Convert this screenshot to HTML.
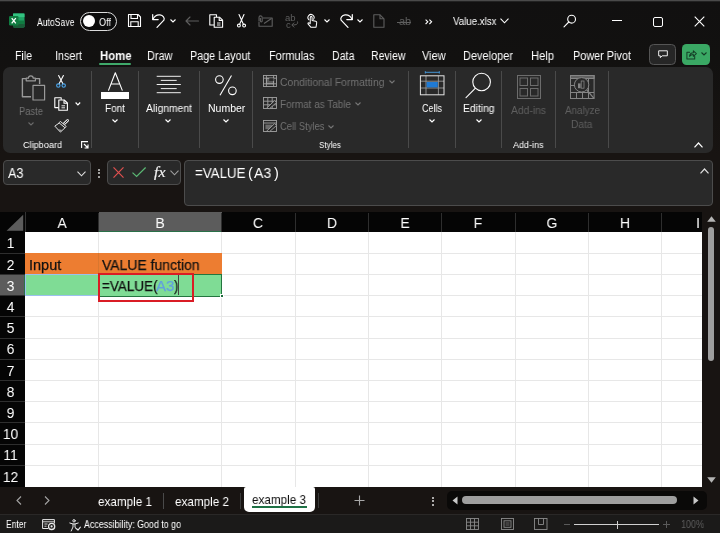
<!DOCTYPE html>
<html lang="en">
<head>
<meta charset="utf-8">
<title>Value.xlsx - Excel</title>
<style>
*{box-sizing:border-box;margin:0;padding:0}
html,body{width:720px;height:533px;overflow:hidden;background:#181412}
body{font-family:"Liberation Sans",sans-serif;color:#fff;position:relative;font-size:12px}
.abs{position:absolute}
.t{position:absolute;white-space:nowrap;line-height:1;will-change:transform}
svg{position:absolute;overflow:visible}
/* title bar */
#title{left:0;top:0;width:720px;height:160px;background:linear-gradient(#111010 0,#121110 60px,#181412 155px)}
#topline{left:0;top:0;width:720px;height:2px;background:linear-gradient(#4a4a4a 0,#4a4a4a 50%,#222 50%,#222 100%)}
/* tabs */
.tab{font-size:12px;top:49.5px;color:#fff}
/* ribbon */
#ribbon{left:3px;top:67px;width:710px;height:86px;background:#292929;border-radius:7px}
.sep{position:absolute;width:1px;background:#4a4a4a;top:71px;height:77px}
.rl{font-size:10.5px;color:#fff;text-align:center}
.dim{color:#727272}
.dim2{color:#5f5f5f}
.grp{font-size:9.5px;color:#fff}
/* formula bar */
.box{position:absolute;background:#292929;border:1px solid #4c4c4c;border-radius:4px}
/* grid */
#grid{left:25px;top:232px;width:675px;height:256px;background:#fff}
.ch{position:absolute;top:212px;height:20px;background:#0a0a0a;color:#fff;font-size:14px;text-align:center;line-height:21px}
.rh{position:absolute;left:0;width:25px;background:#0a0a0a;color:#fff;font-size:14.5px;text-align:center;line-height:21px;height:21px}
.vl{position:absolute;top:232px;width:1px;height:256px;background:#e7e7e7}
.hl{position:absolute;left:25px;height:1px;width:677px;background:#e7e7e7}
.hd{font-size:14.5px;color:#fff;text-align:center;transform:scaleX(0.95)}
.ct{font-size:14.5px;color:#111;-webkit-text-stroke:0.25px}
.cell{position:absolute;font-size:14px;color:#111;line-height:21px;white-space:nowrap}
</style>
</head>
<body>
<!-- TITLE BAR -->
<div class="abs" id="title"></div>
<div class="abs" id="topline"></div>


<!-- Excel logo -->
<svg style="left:9px;top:13px" width="16" height="15" viewBox="0 0 16 15">
  <rect x="4" y="0.5" width="11.5" height="14" rx="1.2" fill="#21a366"/>
  <rect x="4" y="0.5" width="11.5" height="3.6" fill="#33c481"/>
  <rect x="4" y="7.5" width="11.5" height="3.5" fill="#107c41"/>
  <rect x="4" y="11" width="11.5" height="3.5" rx="1.2" fill="#185c37"/>
  <rect x="0" y="3" width="9.5" height="9.5" rx="1.2" fill="#107c41"/>
  <path d="M2.7 5.2 L6.8 10.3 M6.8 5.2 L2.7 10.3" stroke="#fff" stroke-width="1.3" fill="none"/>
</svg>
<div class="t" style="left:37px;top:17px;font-size:10.5px;transform-origin:0 50%;transform:scaleX(0.8233)">AutoSave</div>
<div class="abs" style="left:80px;top:12px;width:37px;height:18.5px;border:1.3px solid #dcdcdc;border-radius:9.5px;background:#0c0c0c"></div>
<div class="abs" style="left:82.8px;top:15.2px;width:12.2px;height:12.2px;border-radius:50%;background:#fff"></div>
<div class="t" style="left:99px;top:17px;font-size:10.5px;transform-origin:0 50%;transform:scaleX(0.8688)">Off</div>
<!-- save -->
<svg style="left:127px;top:13px" width="15" height="15" viewBox="0 0 15 15" fill="none" stroke="#fff" stroke-width="1.1">
  <path d="M1.5 1.5 H11 L13.5 4 V13.5 H1.5 Z" stroke-linejoin="round"/>
  <path d="M4 1.5 V5.5 H10.5 V1.5"/>
  <path d="M3.8 13.5 V8.8 H11.2 V13.5"/>
</svg>
<!-- undo -->
<svg style="left:152px;top:14px" width="13" height="14" viewBox="0 0 13 14" fill="none" stroke="#fff" stroke-width="1.2" stroke-linecap="round" stroke-linejoin="round">
  <path d="M0.7 0.6 V5.6 H6.2"/>
  <path d="M0.9 5.3 C2.5 2 5.5 0.6 8 0.9 C11 1.3 13 3.8 11.9 6.2 L5 13.4"/>
</svg>
<svg style="left:170px;top:19px" width="6" height="4" viewBox="0 0 6 4" fill="none" stroke="#fff" stroke-width="1.1"><path d="M0.5 0.5 L3 3 L5.5 0.5"/></svg>
<!-- back arrow dim -->
<svg style="left:184.5px;top:15.5px" width="14" height="10" viewBox="0 0 14 10" fill="none" stroke="#5e5e5e" stroke-width="1.1" stroke-linecap="round" stroke-linejoin="round"><path d="M13.5 5 H1 M5 1 L1 5 L5 9"/></svg>
<!-- copy/paste icon -->
<svg style="left:209px;top:14px" width="15" height="14" viewBox="0 0 15 14" fill="none" stroke="#fff" stroke-width="1.1" stroke-linejoin="round">
  <path d="M5 11 H0.8 V0.8 H7.5 V3"/>
  <path d="M5.2 3.2 H10.5 L13.6 6.2 V13.2 H5.2 Z"/>
  <path d="M10.2 3.4 V6.4 H13.4"/>
  <path d="M8 9 H11.5 M8 11 H11.5" stroke-width="0.9"/>
</svg>
<!-- scissors -->
<svg style="left:236.5px;top:14px" width="9" height="14" viewBox="0 0 9 14" fill="none" stroke="#fff" stroke-width="1.1" stroke-linecap="round">
  <path d="M2 0.6 L6.4 10.2 M7 0.6 L2.6 10.2"/>
  <circle cx="1.9" cy="11.6" r="1.45"/><circle cx="7.1" cy="11.6" r="1.45"/>
</svg>
<!-- mail dim -->
<svg style="left:258px;top:15px" width="15" height="12" viewBox="0 0 15 12" fill="none" stroke="#5e5e5e" stroke-width="1.1" stroke-linejoin="round">
  <path d="M5 3 H14.2 V11.2 H1 V7"/>
  <path d="M6 8.5 L13.5 3.5"/>
  <path d="M1 6.5 V2.5 A1.6 1.6 0 0 1 4.2 2.5 V6 A0.9 0.9 0 0 1 2.4 6 V3"/>
</svg>
<!-- abc dim -->
<div class="t" style="left:285px;top:13px;font-size:9.5px;color:#5e5e5e">ab</div>
<div class="t" style="left:285.5px;top:19.5px;font-size:9.5px;color:#5e5e5e">c</div>
<svg style="left:290.5px;top:20.5px" width="8" height="7" viewBox="0 0 8 7" fill="none" stroke="#5e5e5e" stroke-width="1"><path d="M6.5 0.5 C7 3 6 4 1 4 M3.2 1.6 L0.8 4 L3.2 6.4"/></svg>
<!-- touch -->
<svg style="left:305.5px;top:13.8px" width="12" height="14" viewBox="0 0 13 15" fill="none" stroke="#fff" stroke-width="1.1" stroke-linecap="round" stroke-linejoin="round">
  <path d="M3.2 6.2 A3.3 3.3 0 1 1 8.2 5.6"/>
  <path d="M4.6 9.5 V3.6 A1 1 0 0 1 6.6 3.6 V7 L10.6 7.8 Q11.8 8.1 11.6 9.4 L10.9 14.2 H5.2 L2.2 10.6 Q1.8 9.6 3 9.4 L4.6 10.4"/>
</svg>
<svg style="left:324.3px;top:19px" width="6" height="4" viewBox="0 0 6 4" fill="none" stroke="#fff" stroke-width="1.1"><path d="M0.5 0.5 L3 3 L5.5 0.5"/></svg>
<!-- redo -->
<svg style="left:340px;top:14px" width="13" height="14" viewBox="0 0 13 14" fill="none" stroke="#fff" stroke-width="1.2" stroke-linecap="round" stroke-linejoin="round">
  <path d="M12.3 0.6 V5.6 H6.8"/>
  <path d="M12.1 5.3 C10.5 2 7.5 0.6 5 0.9 C2 1.3 0 3.8 1.1 6.2 L8 13.4"/>
</svg>
<svg style="left:357px;top:19px" width="6" height="4" viewBox="0 0 6 4" fill="none" stroke="#fff" stroke-width="1.1"><path d="M0.5 0.5 L3 3 L5.5 0.5"/></svg>
<!-- new file dim -->
<svg style="left:373px;top:14px" width="12" height="14" viewBox="0 0 12 14" fill="none" stroke="#5e5e5e" stroke-width="1.1" stroke-linejoin="round">
  <path d="M0.8 0.8 H7 L11 4.8 V13.2 H0.8 Z"/><path d="M7 0.8 V4.8 H11"/>
</svg>
<!-- ab strike dim -->
<div class="t" style="left:398.5px;top:16px;font-size:11px;color:#5e5e5e">ab</div>
<div class="abs" style="left:397px;top:21.5px;width:14px;height:1px;background:#5e5e5e"></div>
<!-- >> -->
<svg style="left:424.8px;top:19.3px" width="8" height="6" viewBox="0 0 8 6" fill="none" stroke="#fff" stroke-width="1.1"><path d="M0.6 0.6 L2.8 2.8 L0.6 5 M4.4 0.6 L6.6 2.8 L4.4 5"/></svg>
<div class="t" style="left:453.3px;top:16px;font-size:11px;transform-origin:0 50%;transform:scaleX(0.8818)">Value.xlsx</div>
<svg style="left:500px;top:18px" width="9" height="6" viewBox="0 0 9 6" fill="none" stroke="#fff" stroke-width="1.1"><path d="M0.5 0.7 L4.5 4.8 L8.5 0.7"/></svg>
<!-- search -->
<svg style="left:563px;top:14px" width="14" height="14" viewBox="0 0 14 14" fill="none" stroke="#fff" stroke-width="1.1" stroke-linecap="round"><circle cx="8.6" cy="5.2" r="3.9"/><path d="M5.8 8 L1 12.8"/></svg>
<!-- window controls -->
<div class="abs" style="left:612px;top:20px;width:10px;height:1px;background:#fff"></div>
<div class="abs" style="left:653px;top:17px;width:10px;height:10px;border:1.2px solid #fff;border-radius:2px"></div>
<svg style="left:694px;top:16px" width="11" height="11" viewBox="0 0 11 11" fill="none" stroke="#fff" stroke-width="1.1"><path d="M0.7 0.7 L10.3 10.3 M10.3 0.7 L0.7 10.3"/></svg>

<!-- TABS -->
<div class="t tab" style="left:14.5px;transform-origin:0 50%;transform:scaleX(0.8788)">File</div>
<div class="t tab" style="left:55px;transform-origin:0 50%;transform:scaleX(0.8995)">Insert</div>
<div class="t tab" style="left:99.5px;font-weight:bold;transform-origin:0 50%;transform:scaleX(0.9447)" id="home">Home</div>
<div class="abs" style="left:99px;top:62.5px;width:32px;height:2px;background:#3fa96a;border-radius:1px"></div>
<div class="t tab" style="left:147px;transform-origin:0 50%;transform:scaleX(0.9102)">Draw</div>
<div class="t tab" style="left:190px;transform-origin:0 50%;transform:scaleX(0.8978)">Page Layout</div>
<div class="t tab" style="left:268.5px;transform-origin:0 50%;transform:scaleX(0.9097)">Formulas</div>
<div class="t tab" style="left:331.5px;transform-origin:0 50%;transform:scaleX(0.8872)">Data</div>
<div class="t tab" style="left:370.5px;transform-origin:0 50%;transform:scaleX(0.8765)">Review</div>
<div class="t tab" style="left:422px;transform-origin:0 50%;transform:scaleX(0.9110)">View</div>
<div class="t tab" style="left:463px;transform-origin:0 50%;transform:scaleX(0.9140)">Developer</div>
<div class="t tab" style="left:531px;transform-origin:0 50%;transform:scaleX(0.9316)">Help</div>
<div class="t tab" style="left:572.5px;transform-origin:0 50%;transform:scaleX(0.9058)">Power Pivot</div>
<!-- comment button -->
<div class="abs" style="left:649px;top:43.8px;width:27px;height:21px;background:#262626;border:1px solid #555;border-radius:4.5px"></div>
<svg style="left:657.5px;top:49.8px" width="10" height="8.6" viewBox="0 0 12 10" fill="none" stroke="#fff" stroke-width="1.1" stroke-linejoin="round"><path d="M0.8 0.8 H11.2 V6.8 H5 L2.8 9 V6.8 H0.8 Z"/></svg>
<!-- share button -->
<div class="abs" style="left:682.3px;top:43.8px;width:27.3px;height:21px;background:#3aa864;border-radius:4.5px"></div>
<svg style="left:685.8px;top:48.6px" width="11" height="11" viewBox="0 0 12 12" fill="none" stroke="#143d26" stroke-width="1.1" stroke-linejoin="round" stroke-linecap="round"><path d="M4 3.5 H1 V11 H9.5 V8"/><path d="M3.8 8 C4.2 5.2 6 4.2 8 4.2 V2 L11.3 5 L8 8 V6 C6.2 6 4.8 6.6 3.8 8 Z"/></svg>
<svg style="left:700.6px;top:52.3px" width="6" height="4" viewBox="0 0 6 4" fill="none" stroke="#143d26" stroke-width="1.1"><path d="M0.5 0.5 L3 3 L5.5 0.5"/></svg>

<!-- RIBBON -->
<div class="abs" id="ribbon"></div>


<!-- separators -->
<div class="sep" style="left:91px"></div>
<div class="sep" style="left:138px"></div>
<div class="sep" style="left:199px"></div>
<div class="sep" style="left:252px"></div>
<div class="sep" style="left:408px"></div>
<div class="sep" style="left:455px"></div>
<div class="sep" style="left:501px"></div>
<div class="sep" style="left:555px"></div>
<div class="sep" style="left:608px"></div>

<!-- Clipboard group -->
<svg style="left:21px;top:75px" width="25" height="26" viewBox="0 0 25 26" fill="none" stroke="#9a9a9a" stroke-width="1.4" stroke-linejoin="round">
  <path d="M10 21.8 H1.4 V3.6 H5"/>
  <path d="M14.5 3.6 H18.6 V9"/>
  <path d="M5.2 5.8 V3.2 H7.4 A2.4 2.4 0 0 1 12.2 3.2 H14.4 V5.8 Z" stroke-width="1.2"/>
  <rect x="12" y="10.4" width="11.6" height="14.6" stroke-width="1.2"/>
</svg>
<div class="t rl dim" style="left:19.3px;top:105.5px;transform-origin:0 50%;transform:scaleX(0.8935)">Paste</div>
<svg style="left:28px;top:121.5px" width="6" height="4" viewBox="0 0 6 4" fill="none" stroke="#6a6a6a" stroke-width="1.1"><path d="M0.5 0.5 L3 3 L5.5 0.5"/></svg>
<!-- cut -->
<svg style="left:56px;top:75px" width="10" height="13" viewBox="0 0 10 13" fill="none" stroke-width="1.1" stroke-linecap="round">
  <path d="M2.6 0.6 L6.9 8.8 M7.4 0.6 L3.1 8.8" stroke="#fff"/>
  <circle cx="2.3" cy="10.6" r="1.7" stroke="#4aa3e8"/><circle cx="7.7" cy="10.6" r="1.7" stroke="#4aa3e8"/>
</svg>
<!-- copy -->
<svg style="left:54px;top:96.5px" width="15" height="14" viewBox="0 0 15 14" fill="none" stroke="#fff" stroke-width="1.1" stroke-linejoin="round">
  <path d="M4.6 10.6 H0.8 V0.8 H7.2 V2.8"/>
  <path d="M4.8 3 H10.2 L13.4 6 V13.2 H4.8 Z"/>
  <path d="M10 3.2 V6.2 H13.2"/>
  <path d="M7.5 8.8 H11 M7.5 10.8 H11" stroke-width="0.9"/>
</svg>
<svg style="left:75px;top:101.8px" width="6" height="4" viewBox="0 0 6 4" fill="none" stroke="#fff" stroke-width="1.2"><path d="M0.6 0.5 L2.9 2.8 L5.2 0.5"/></svg>
<!-- format painter -->
<svg style="left:54px;top:118.5px" width="15" height="14" viewBox="0 0 15 14" fill="none" stroke="#e0e0e0" stroke-width="1" stroke-linejoin="round" stroke-linecap="round">
  <path d="M13.6 1.4 L10.4 4.6" stroke-width="2.8"/>
  <path d="M13.6 1.4 L10.6 4.4" stroke="#292929" stroke-width="1"/>
  <path d="M6.6 2.6 L12.2 7.4 L11 8.8 L5.3 4 Z" fill="#292929"/>
  <path d="M5.3 4 L0.8 7.1 L6.4 13.1 L11 8.8" />
  <path d="M3.4 10 L6.4 13.1 L8.6 11 Z" fill="#9a9a9a" stroke="none"/>
</svg>
<div class="t grp" style="left:22.5px;top:140px;transform-origin:0 50%;transform:scaleX(0.9589)">Clipboard</div>
<svg style="left:81.3px;top:140.8px" width="8" height="8" viewBox="0 0 8 8" fill="none" stroke="#fff" stroke-width="1.15"><path d="M7 0.6 H0.6 V7"/><path d="M3 3 L7 7 M7 3.6 V7 H3.6"/></svg>

<!-- Font -->
<svg style="left:108px;top:72.3px" width="15" height="19" viewBox="0 0 15 19" fill="none" stroke="#fff" stroke-width="1.1" stroke-linejoin="round"><path d="M0.4 18.6 L7.3 0.8 L14.4 18.6 M3 12 H11.8"/></svg>
<div class="abs" style="left:101px;top:91.5px;width:28px;height:7.5px;background:#fff"></div>
<div class="t rl" style="left:105px;top:103px;transform-origin:0 50%;transform:scaleX(0.9517)">Font</div>
<svg style="left:112px;top:119px" width="6" height="4" viewBox="0 0 6 4" fill="none" stroke="#fff" stroke-width="1.2"><path d="M0.5 0.5 L3 3 L5.5 0.5"/></svg>

<!-- Alignment -->
<svg style="left:156px;top:75px" width="26" height="19" viewBox="0 0 26 19" fill="none" stroke="#f0f0f0" stroke-width="1"><path d="M0.7 1.3 H24.8 M4.8 5.4 H20.7 M0.7 9.5 H24.8 M4.8 13.6 H20.7 M0.7 17.7 H24.8"/></svg>
<div class="t rl" style="left:145.5px;top:103px;transform-origin:0 50%;transform:scaleX(0.9849)">Alignment</div>
<svg style="left:165px;top:119px" width="6" height="4" viewBox="0 0 6 4" fill="none" stroke="#fff" stroke-width="1.2"><path d="M0.5 0.5 L3 3 L5.5 0.5"/></svg>

<!-- Number -->
<svg style="left:215px;top:74.5px" width="22" height="21" viewBox="0 0 22 21" fill="none" stroke="#fff" stroke-width="1.1"><circle cx="4.4" cy="4.6" r="3.8"/><circle cx="17.4" cy="15.8" r="3.8"/><path d="M16.5 0.5 L5 20.3"/></svg>
<div class="t rl" style="left:207.5px;top:103px;transform-origin:0 50%;transform:scaleX(0.9904)">Number</div>
<svg style="left:223px;top:119px" width="6" height="4" viewBox="0 0 6 4" fill="none" stroke="#fff" stroke-width="1.2"><path d="M0.5 0.5 L3 3 L5.5 0.5"/></svg>

<!-- Styles -->
<svg style="left:262.5px;top:75px" width="14" height="12" viewBox="0 0 14 12" fill="none" stroke="#a2a2a2" stroke-width="0.9"><rect x="0.5" y="0.5" width="13" height="11"/><path d="M0.5 3.2 H13.5 M0.5 8.8 H13.5 M3.4 0.5 V11.5 M10.6 0.5 V11.5"/><rect x="3.4" y="3.2" width="7.2" height="5.6" fill="#a2a2a2" fill-opacity="0.4"/><rect x="6.2" y="3.2" width="4.4" height="2.8" fill="#292929" stroke="none"/></svg>
<svg style="left:262.5px;top:97.3px" width="14" height="12" viewBox="0 0 14 12" fill="none" stroke="#a2a2a2" stroke-width="0.9"><rect x="0.5" y="0.5" width="13" height="11"/><path d="M0.5 4.2 H13.5 M0.5 7.8 H13.5 M4.8 0.5 V11.5 M9.2 0.5 V11.5"/><path d="M3.4 11.4 L11.6 3.6 L13.6 5.4 L6.6 11.6 Z" fill="#292929" stroke-width="0.9"/></svg>
<svg style="left:262.5px;top:119.8px" width="14" height="12" viewBox="0 0 14 12" fill="none" stroke="#a2a2a2" stroke-width="0.9"><rect x="0.5" y="0.5" width="13" height="11"/><path d="M0.5 3 H13.5"/><rect x="2.4" y="4.6" width="7" height="4.6" fill="#a2a2a2" fill-opacity="0.55" stroke="none"/><path d="M3.4 11.4 L11.6 3.6 L13.6 5.4 L6.6 11.6 Z" fill="#292929" stroke-width="0.9"/></svg>
<div class="t rl dim" style="left:280px;top:76.5px;transform-origin:0 50%;transform:scaleX(0.9892)">Conditional Formatting</div>
<svg style="left:389px;top:80px" width="6" height="4" viewBox="0 0 6 4" fill="none" stroke="#767676" stroke-width="1.1"><path d="M0.5 0.5 L3 3 L5.5 0.5"/></svg>
<div class="t rl dim" style="left:280px;top:98.5px;transform-origin:0 50%;transform:scaleX(0.9455)">Format as Table</div>
<svg style="left:354.5px;top:102px" width="6" height="4" viewBox="0 0 6 4" fill="none" stroke="#767676" stroke-width="1.1"><path d="M0.5 0.5 L3 3 L5.5 0.5"/></svg>
<div class="t rl dim" style="left:280px;top:121px;transform-origin:0 50%;transform:scaleX(0.8970)">Cell Styles</div>
<svg style="left:328px;top:124.5px" width="6" height="4" viewBox="0 0 6 4" fill="none" stroke="#767676" stroke-width="1.1"><path d="M0.5 0.5 L3 3 L5.5 0.5"/></svg>
<div class="t grp" style="left:319px;top:140px;transform-origin:0 50%;transform:scaleX(0.8502)">Styles</div>

<!-- Cells -->
<svg style="left:420px;top:71px" width="25" height="24" viewBox="0 0 25 24" fill="none" stroke-width="1">
  <path d="M5.3 1.3 H19.3 M5.3 0.2 V2.5 M19.3 0.2 V2.5" stroke="#4aa3e8" stroke-width="0.9"/>
  <path d="M0.3 10.2 H24 M0.3 17 H24 M6 4.8 V23.8 M18.4 4.8 V23.8" stroke="#9a9a9a" stroke-width="0.9"/>
  <rect x="0.4" y="4.8" width="23.6" height="19" stroke="#e4e4e4"/>
  <rect x="6.6" y="11" width="11.2" height="5.4" fill="#1f7ad4" stroke="none"/>
</svg>
<div class="t rl" style="left:422px;top:103px;transform-origin:0 50%;transform:scaleX(0.8568)">Cells</div>
<svg style="left:429px;top:119px" width="6" height="4" viewBox="0 0 6 4" fill="none" stroke="#fff" stroke-width="1.2"><path d="M0.5 0.5 L3 3 L5.5 0.5"/></svg>

<!-- Editing -->
<svg style="left:465px;top:72px" width="27" height="27" viewBox="0 0 27 27" fill="none" stroke="#fff" stroke-width="1.1" stroke-linecap="round"><circle cx="16.6" cy="10" r="8.8"/><path d="M10.2 16.4 L1 25.6"/></svg>
<div class="t rl" style="left:462.5px;top:103px;transform-origin:0 50%;transform:scaleX(0.9810)">Editing</div>
<svg style="left:475.5px;top:119px" width="6" height="4" viewBox="0 0 6 4" fill="none" stroke="#fff" stroke-width="1.2"><path d="M0.5 0.5 L3 3 L5.5 0.5"/></svg>

<!-- Add-ins -->
<svg style="left:517px;top:74.8px" width="24" height="24" viewBox="0 0 24 24" fill="none" stroke="#6c6c6c" stroke-width="1"><rect x="0.5" y="0.5" width="23" height="23"/><rect x="3" y="3" width="7.5" height="7.5"/><rect x="13.5" y="3" width="7.5" height="7.5"/><rect x="3" y="13.5" width="7.5" height="7.5"/><rect x="13.5" y="13.5" width="7.5" height="7.5"/></svg>
<div class="t rl dim2" style="left:511px;top:105px;transform-origin:0 50%;transform:scaleX(0.9829)">Add-ins</div>
<div class="t grp" style="left:513px;top:140px;transform-origin:0 50%;transform:scaleX(0.9467)">Add-ins</div>

<!-- Analyze Data -->
<svg style="left:570px;top:75px" width="25" height="24" viewBox="0 0 25 24" fill="none" stroke="#858585" stroke-width="1">
  <rect x="0.5" y="0.5" width="23.6" height="23"/>
  <rect x="0.5" y="0.5" width="23.6" height="3" fill="#858585" fill-opacity="0.6"/>
  <path d="M0.5 17.5 H24 M6.5 17.5 V23.5 M12.5 17.5 V23.5 M18.5 3.5 V23.5 M0.5 10.5 H4"/>
  <circle cx="11.6" cy="9.8" r="7.2" fill="#292929"/>
  <path d="M16.8 15 L24 23.4" stroke-width="1.2"/>
  <rect x="8" y="8.4" width="2.6" height="4.8" fill="#858585" stroke="none"/><rect x="11.2" y="6" width="2.8" height="7.2" stroke-width="0.8"/>
</svg>
<div class="t rl dim2" style="left:564.5px;top:105px;transform-origin:0 50%;transform:scaleX(0.9368)">Analyze</div>
<div class="t rl dim2" style="left:571px;top:118.5px;transform-origin:0 50%;transform:scaleX(0.9690)">Data</div>
<!-- collapse -->
<svg style="left:694px;top:141.5px" width="9" height="6" viewBox="0 0 9 6" fill="none" stroke="#fff" stroke-width="1.2"><path d="M0.5 5.3 L4.5 1 L8.5 5.3"/></svg>

<!-- FORMULA BAR -->
<div class="box" style="left:3px;top:160px;width:87.5px;height:25px"></div>
<div class="box" style="left:107px;top:160px;width:74px;height:25px"></div>
<div class="box" style="left:184px;top:160px;width:529px;height:46px"></div>


<div class="t" style="left:8px;top:166px;font-size:14px;transform-origin:0 50%;transform:scaleX(0.9051)">A3</div>
<svg style="left:76.5px;top:170.5px" width="9" height="6" viewBox="0 0 9 6" fill="none" stroke="#e0e0e0" stroke-width="1.1"><path d="M0.5 0.7 L4.5 4.8 L8.5 0.7"/></svg>
<div class="abs" style="left:98px;top:168.5px;width:2px;height:2px;background:#d0d0d0;border-radius:1px"></div>
<div class="abs" style="left:98px;top:172px;width:2px;height:2px;background:#d0d0d0;border-radius:1px"></div>
<div class="abs" style="left:98px;top:175.5px;width:2px;height:2px;background:#d0d0d0;border-radius:1px"></div>
<svg style="left:112.8px;top:167px" width="11" height="11" viewBox="0 0 11 11" fill="none" stroke="#e0504f" stroke-width="1.2"><path d="M0.5 0.3 L10.5 10.6 M10.5 0.3 L0.5 10.6"/></svg>
<svg style="left:132px;top:167px" width="14" height="10" viewBox="0 0 14 10" fill="none" stroke="#5bb974" stroke-width="1.2"><path d="M0.5 5.6 L4.6 9.4 L13.6 0.5"/></svg>
<div class="t" style="left:153.6px;top:165px;font-size:15px;font-style:italic;font-family:'Liberation Serif',serif;color:#f0f0f0;-webkit-text-stroke:0.2px #f0f0f0;transform-origin:0 50%;transform:scaleX(1.0620)">fx</div>
<svg style="left:170.3px;top:170px" width="9" height="6" viewBox="0 0 9 6" fill="none" stroke="#a0a0a0" stroke-width="1.1"><path d="M0.5 0.7 L4.5 4.8 L8.5 0.7"/></svg>
<div class="t" style="left:194.8px;top:165.7px;font-size:14.5px;transform-origin:0 50%;transform:scaleX(0.9190)">=VALUE</div>
<div class="t" style="left:248px;top:165.7px;font-size:14.5px;transform-origin:0 50%;transform:scaleX(0.9497)">(</div>
<div class="t" style="left:254.2px;top:165.7px;font-size:14.5px;transform-origin:0 50%;transform:scaleX(0.9690)">A3</div>
<div class="t" style="left:273.6px;top:165.7px;font-size:14.5px;transform-origin:0 50%;transform:scaleX(0.9497)">)</div>
<svg style="left:700.3px;top:167.8px" width="9" height="6" viewBox="0 0 9 6" fill="none" stroke="#e0e0e0" stroke-width="1.2"><path d="M0.5 5.3 L4.5 1 L8.5 5.3"/></svg>

<!-- GRID -->
<div class="abs" id="grid" style="left:25px;top:232px;width:677px;height:255px;background:#fff"></div>
<div class="abs" style="left:0;top:211.5px;width:702px;height:20.5px;background:#050505"></div>
<div class="abs" style="left:0;top:232px;width:25px;height:255px;background:#050505"></div>
<svg style="left:6px;top:214px" width="18" height="17" viewBox="0 0 18 17"><path d="M17.2 0.8 V16.7 H0.6 Z" fill="#5c5c5c"/></svg>
<div class="abs" style="left:24.8px;top:212px;width:1px;height:20px;background:#333"></div>
<div class="abs" style="left:98.5px;top:212px;width:123px;height:20px;background:#5c5c5c;border-bottom:1.5px solid #2a7048"></div>
<div class="abs" style="left:0;top:274.40px;width:25px;height:21.20px;background:#5c5c5c;border-right:1.5px solid #2a7048"></div>
<div class="t hd" style="left:51.75px;top:216px;width:20px">A</div>
<div class="t hd" style="left:150.00px;top:216px;width:20px">B</div>
<div class="abs" style="left:98.0px;top:213px;width:1px;height:19px;background:#2e2e2e"></div>
<div class="t hd" style="left:248.25px;top:216px;width:20px">C</div>
<div class="abs" style="left:221.0px;top:213px;width:1px;height:19px;background:#2e2e2e"></div>
<div class="t hd" style="left:321.75px;top:216px;width:20px">D</div>
<div class="abs" style="left:294.5px;top:213px;width:1px;height:19px;background:#2e2e2e"></div>
<div class="t hd" style="left:395.00px;top:216px;width:20px">E</div>
<div class="abs" style="left:368.0px;top:213px;width:1px;height:19px;background:#2e2e2e"></div>
<div class="t hd" style="left:468.25px;top:216px;width:20px">F</div>
<div class="abs" style="left:441.0px;top:213px;width:1px;height:19px;background:#2e2e2e"></div>
<div class="t hd" style="left:541.75px;top:216px;width:20px">G</div>
<div class="abs" style="left:514.5px;top:213px;width:1px;height:19px;background:#2e2e2e"></div>
<div class="t hd" style="left:615.00px;top:216px;width:20px">H</div>
<div class="abs" style="left:588.0px;top:213px;width:1px;height:19px;background:#2e2e2e"></div>
<div class="t hd" style="left:688.25px;top:216px;width:20px">I</div>
<div class="abs" style="left:661.0px;top:213px;width:1px;height:19px;background:#2e2e2e"></div>
<div class="t hd" style="left:0.4px;top:236.30px;width:21px">1</div>
<div class="t hd" style="left:0.4px;top:257.50px;width:21px">2</div>
<div class="abs" style="left:0;top:252.70px;width:25px;height:1px;background:#2e2e2e"></div>
<div class="t hd" style="left:0.4px;top:278.70px;width:21px">3</div>
<div class="abs" style="left:0;top:273.90px;width:25px;height:1px;background:#2e2e2e"></div>
<div class="t hd" style="left:0.4px;top:299.90px;width:21px">4</div>
<div class="abs" style="left:0;top:295.10px;width:25px;height:1px;background:#2e2e2e"></div>
<div class="t hd" style="left:0.4px;top:321.10px;width:21px">5</div>
<div class="abs" style="left:0;top:316.30px;width:25px;height:1px;background:#2e2e2e"></div>
<div class="t hd" style="left:0.4px;top:342.30px;width:21px">6</div>
<div class="abs" style="left:0;top:337.50px;width:25px;height:1px;background:#2e2e2e"></div>
<div class="t hd" style="left:0.4px;top:363.50px;width:21px">7</div>
<div class="abs" style="left:0;top:358.70px;width:25px;height:1px;background:#2e2e2e"></div>
<div class="t hd" style="left:0.4px;top:384.70px;width:21px">8</div>
<div class="abs" style="left:0;top:379.90px;width:25px;height:1px;background:#2e2e2e"></div>
<div class="t hd" style="left:0.4px;top:405.90px;width:21px">9</div>
<div class="abs" style="left:0;top:401.10px;width:25px;height:1px;background:#2e2e2e"></div>
<div class="t hd" style="left:0.4px;top:427.10px;width:21px">10</div>
<div class="abs" style="left:0;top:422.30px;width:25px;height:1px;background:#2e2e2e"></div>
<div class="t hd" style="left:0.4px;top:448.30px;width:21px">11</div>
<div class="abs" style="left:0;top:443.50px;width:25px;height:1px;background:#2e2e2e"></div>
<div class="t hd" style="left:0.4px;top:469.50px;width:21px">12</div>
<div class="abs" style="left:0;top:464.70px;width:25px;height:1px;background:#2e2e2e"></div>
<div class="vl" style="left:98.0px;height:255px"></div>
<div class="vl" style="left:221.0px;height:255px"></div>
<div class="vl" style="left:294.5px;height:255px"></div>
<div class="vl" style="left:368.0px;height:255px"></div>
<div class="vl" style="left:441.0px;height:255px"></div>
<div class="vl" style="left:514.5px;height:255px"></div>
<div class="vl" style="left:588.0px;height:255px"></div>
<div class="vl" style="left:661.0px;height:255px"></div>
<div class="hl" style="top:252.70px"></div>
<div class="hl" style="top:273.90px"></div>
<div class="hl" style="top:295.10px"></div>
<div class="hl" style="top:316.30px"></div>
<div class="hl" style="top:337.50px"></div>
<div class="hl" style="top:358.70px"></div>
<div class="hl" style="top:379.90px"></div>
<div class="hl" style="top:401.10px"></div>
<div class="hl" style="top:422.30px"></div>
<div class="hl" style="top:443.50px"></div>
<div class="hl" style="top:464.70px"></div>
<div class="abs" style="left:702px;top:207px;width:18px;height:280px;background:#181412"></div>
<div class="abs" style="left:25px;top:253.20px;width:196.5px;height:21.20px;background:#ed7d31"></div>
<div class="abs" style="left:98px;top:253.20px;width:1px;height:21.20px;background:#d9772f"></div>
<div class="abs" style="left:25px;top:274.40px;width:196.5px;height:21.20px;background:#7fdc95"></div>
<div class="abs" style="left:25px;top:273.90px;width:74px;height:22.20px;border:1px solid #9cc0ee"></div>
<div class="abs" style="left:98px;top:273.60px;width:124.3px;height:23.50px;border:1.4px solid #23753f"></div>
<div class="abs" style="left:219.8px;top:293.80px;width:4px;height:4px;background:#1e6b3c;border:0.5px solid #fff"></div>
<div class="t ct" style="left:28.5px;top:258.20px;transform-origin:0 50%;transform:scaleX(0.9922)">Input</div>
<div class="t ct" style="left:101.5px;top:258.20px;transform-origin:0 50%;transform:scaleX(0.9625)">VALUE function</div>
<div class="t ct" style="left:101.9px;top:279.40px;transform-origin:0 50%;transform:scaleX(0.9284)">=VALUE(</div>
<div class="t ct" style="left:156.3px;top:279.40px;color:#62a0de;transform-origin:0 50%;transform:scaleX(1.0423)">A3</div>
<div class="t ct" style="left:174px;top:279.40px;transform-origin:0 50%;transform:scaleX(0.8877)">)</div>
<div class="abs" style="left:178.3px;top:274.90px;width:1px;height:20.5px;background:#444"></div>
<div class="abs" style="left:97.7px;top:273.3px;width:96.4px;height:28.4px;border:2.6px solid #da1c25"></div>
<svg style="left:706.5px;top:215.5px" width="9" height="6" viewBox="0 0 9 6"><path d="M4.5 0.3 L8.8 5.8 H0.2 Z" fill="#b4b4b4"/></svg>
<div class="abs" style="left:708.2px;top:226.5px;width:6.3px;height:134.5px;background:#9e9e9e;border-radius:3px"></div>
<svg style="left:706.5px;top:477.3px" width="9" height="6" viewBox="0 0 9 6"><path d="M0.2 0.2 H8.8 L4.5 5.7 Z" fill="#b4b4b4"/></svg>
<!-- SHEET TABS -->
<div class="abs" style="left:0;top:487px;width:720px;height:27px;background:#181412"></div>
<svg style="left:16px;top:495.5px" width="6" height="9" viewBox="0 0 6 9" fill="none" stroke="#a4a4a4" stroke-width="1.1"><path d="M5 0.5 L1 4.5 L5 8.5"/></svg>
<svg style="left:44px;top:495.5px" width="6" height="9" viewBox="0 0 6 9" fill="none" stroke="#a4a4a4" stroke-width="1.1"><path d="M1 0.5 L5 4.5 L1 8.5"/></svg>
<div class="t" style="left:98px;top:495px;font-size:13px;transform-origin:0 50%;transform:scaleX(0.9002)">example 1</div>
<div class="abs" style="left:163px;top:493px;width:1px;height:15.5px;background:#4a4a4a"></div>
<div class="abs" style="left:240px;top:493px;width:1px;height:15.5px;background:#3a3a3a"></div>
<div class="t" style="left:175px;top:495px;font-size:13px;transform-origin:0 50%;transform:scaleX(0.9002)">example 2</div>
<div class="abs" style="left:244px;top:487px;width:71px;height:24.5px;background:#fff;border-radius:2px 2px 5px 5px"></div>
<div class="t" style="left:252px;top:493px;font-size:13px;color:#111;transform-origin:0 50%;transform:scaleX(0.9002)">example 3</div>
<div class="abs" style="left:251.5px;top:505.5px;width:55px;height:2px;background:#1e7145"></div>
<div class="abs" style="left:318px;top:493px;width:1px;height:15px;background:#3a3a3a"></div>
<svg style="left:353.5px;top:495px" width="11" height="11" viewBox="0 0 11 11" fill="none" stroke="#a8a8a8" stroke-width="1.1"><path d="M5.5 0.5 V10.5 M0.5 5.5 H10.5"/></svg>
<div class="abs" style="left:432px;top:496.5px;width:2px;height:2px;background:#e0e0e0;border-radius:1px"></div>
<div class="abs" style="left:432px;top:500px;width:2px;height:2px;background:#e0e0e0;border-radius:1px"></div>
<div class="abs" style="left:432px;top:503.5px;width:2px;height:2px;background:#e0e0e0;border-radius:1px"></div>
<!-- h scrollbar -->
<div class="abs" style="left:447px;top:490.5px;width:260px;height:19px;background:#0a0908;border-radius:5px"></div>
<svg style="left:451.5px;top:496px" width="6" height="9" viewBox="0 0 6 9"><path d="M5.5 0.5 V8.5 L0.5 4.5 Z" fill="#c8c8c8"/></svg>
<div class="abs" style="left:462px;top:496px;width:215px;height:8px;background:#9e9e9e;border-radius:4px"></div>
<svg style="left:693px;top:496px" width="6" height="9" viewBox="0 0 6 9"><path d="M0.5 0.5 V8.5 L5.5 4.5 Z" fill="#c8c8c8"/></svg>

<!-- STATUS BAR -->
<div class="abs" style="left:0;top:513.5px;width:720px;height:19.5px;background:#1b1a19;border-top:1px solid #2a2827"></div>
<div class="t" style="left:6.2px;top:520px;font-size:10px;transform-origin:0 50%;transform:scaleX(0.8492)">Enter</div>
<svg style="left:41.8px;top:519px" width="14" height="11" viewBox="0 0 14 11" fill="none" stroke="#e8e8e8" stroke-width="1"><path d="M6 9.5 H0.6 V0.6 H12.4 V4.5"/><path d="M0.6 2.8 H12.4 M2.4 5 H5.6 M2.4 7.2 H4.6" stroke-width="0.9"/><circle cx="9.6" cy="7.4" r="3.1" stroke-width="1.3"/><circle cx="9.6" cy="7.4" r="1.1" fill="#e8e8e8" stroke="none"/></svg>
<svg style="left:69px;top:518.5px" width="12" height="13" viewBox="0 0 12 13" fill="none" stroke="#e8e8e8" stroke-width="1" stroke-linecap="round" stroke-linejoin="round"><circle cx="5" cy="1.8" r="1.2"/><path d="M0.8 4 L4 5 H6 L9.2 4 M4 5 V8 L2.2 12 M6 5 V8 L7.2 10"/><path d="M7.6 9.6 L9 11.2 L11.4 8.2" stroke-width="1.1"/></svg>
<div class="t" style="left:84px;top:520px;font-size:10px;transform-origin:0 50%;transform:scaleX(0.8858)">Accessibility: Good to go</div>
<!-- view buttons -->
<svg style="left:466px;top:518px" width="13" height="12" viewBox="0 0 13 12" fill="none" stroke="#8a8a8a" stroke-width="0.9"><rect x="0.5" y="0.5" width="12" height="11"/><path d="M0.5 4.2 H12.5 M0.5 7.8 H12.5 M4.5 0.5 V11.5 M8.5 0.5 V11.5"/></svg>
<svg style="left:501px;top:518px" width="13" height="12" viewBox="0 0 13 12" fill="none" stroke="#8a8a8a" stroke-width="0.9"><rect x="0.5" y="0.5" width="12" height="11"/><rect x="3" y="2.8" width="7" height="6.5"/><path d="M4.5 5 H8.5 M4.5 7 H8.5" stroke-width="0.7"/></svg>
<svg style="left:534px;top:518px" width="14" height="12" viewBox="0 0 14 12" fill="none" stroke="#8a8a8a" stroke-width="0.9"><rect x="0.5" y="0.5" width="12.5" height="11"/><path d="M4.5 0.5 V6.5 H9.5 V0.5"/></svg>
<div class="abs" style="left:563.5px;top:524px;width:6px;height:1px;background:#5a5a5a"></div>
<div class="abs" style="left:574px;top:524px;width:85px;height:1px;background:#d0d0d0"></div>
<div class="abs" style="left:616.5px;top:520.5px;width:1px;height:8px;background:#d0d0d0"></div>
<svg style="left:663px;top:521px" width="7" height="7" viewBox="0 0 7 7" fill="none" stroke="#5a5a5a" stroke-width="1"><path d="M3.5 0 V7 M0 3.5 H7"/></svg>
<div class="t" style="left:681px;top:520px;font-size:10px;color:#5e5e5e;transform-origin:0 50%;transform:scaleX(0.8992)">100%</div>



</body>
</html>
